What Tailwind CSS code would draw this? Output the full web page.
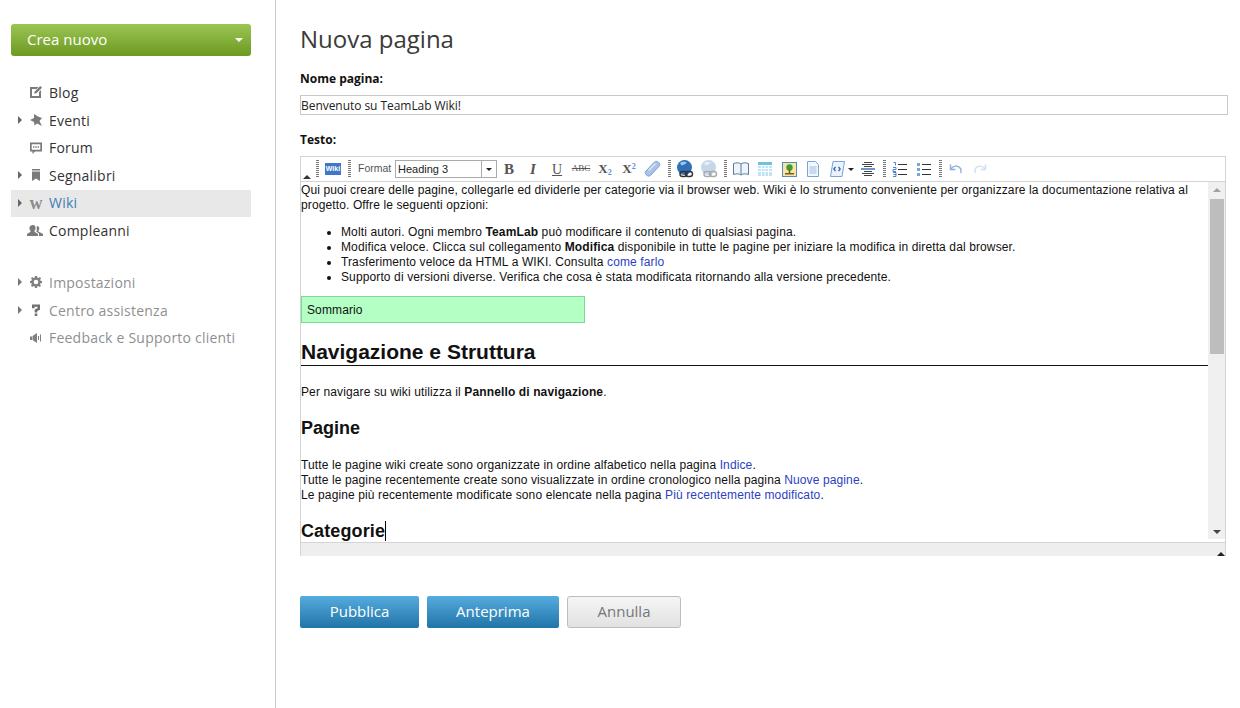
<!DOCTYPE html>
<html lang="it">
<head>
    <meta charset="UTF-8">
    <title>Nuova pagina</title>
    <script src="https://cdn.jsdelivr.net/npm/@tailwindcss/browser@4"></script>
</head>
<body class="bg-white font-['Open_Sans',sans-serif] text-[#333] overflow-hidden">
    <div class="flex h-[708px] w-[1240px]">
        <!-- sidebar -->
        <aside class="w-[276px] shrink-0 border-r border-[#c8c8c8] pt-6 pl-[11px] pr-6">
            <div class="flex h-8 items-center justify-between rounded-[3px] bg-gradient-to-b from-[#9bc552] to-[#6d9a20] pb-[2px] pl-4 pr-[8px] text-[15px] text-white">
                <span>Crea nuovo</span>
                <span class="mt-[2px] h-0 w-0 border-x-[4px] border-t-[4px] border-x-transparent border-t-white"></span>
            </div>
            <nav class="mt-[23px] text-[14px] tracking-[0.22px]">
                <div class="flex h-[28px] items-center pb-[2px] pl-[18px]">
                    <svg class="mr-[6px] size-[14px]" viewBox="0 0 14 14"><path fill="#7a7a7a" d="M1 2h8.500L7.500 4H3v7h7V7l2-2v8H1z"/><path fill="#7a7a7a" d="M11.300 1 13 2.700 7.400 8.300 5.200 8.800 5.700 6.600z"/></svg>
                    <span>Blog</span>
                </div>
                <div class="relative flex h-[28px] items-center pb-[2px] pl-[18px]">
                    <span class="absolute left-[7px] h-0 w-0 border-y-[4px] border-l-[4px] border-y-transparent border-l-[#666]"></span>
                    <svg class="mr-[6px] size-[14px]" viewBox="0 0 14 14"><path fill="#7a7a7a" d="M5 1 9 3.500 13 5 10.500 8 13 13 8 10.500 5.500 12.500 5 9 1 7 5 5z"/></svg>
                    <span>Eventi</span>
                </div>
                <div class="flex h-[27px] items-center pb-[2px] pl-[18px]">
                    <svg class="mr-[6px] size-[14px]" viewBox="0 0 14 14"><path fill="#7a7a7a" fill-rule="evenodd" d="M1 1.500h12v9H6L3.500 13v-2.500H1zM2.700 3.200v5.600h8.600V3.200zM4 5.300h1.400v1.400H4zm2.300 0h1.400v1.400H6.300zm2.300 0H10v1.400H8.600z"/></svg>
                    <span>Forum</span>
                </div>
                <div class="relative flex h-[28px] items-center pb-[2px] pl-[18px]">
                    <span class="absolute left-[7px] h-0 w-0 border-y-[4px] border-l-[4px] border-y-transparent border-l-[#666]"></span>
                    <svg class="mr-[6px] size-[14px]" viewBox="0 0 14 14"><path fill="#7a7a7a" d="M3 1h8v1.500H3zM3 3.500h8V13L7 10.500 3 13z"/></svg>
                    <span>Segnalibri</span>
                </div>
                <div class="relative flex h-[27px] items-center bg-[#e8e8e8] pb-[2px] pl-[18px] text-[#3d7fb5]">
                    <span class="absolute left-[7px] h-0 w-0 border-y-[4px] border-l-[4px] border-y-transparent border-l-[#666]"></span>
                    <span class="mr-[6px] w-[14px] text-center font-['Liberation_Serif',serif] text-[18px] leading-none font-bold tracking-normal text-[#8a8a8a]">w</span>
                    <span>Wiki</span>
                </div>
                <div class="flex h-[28px] items-center pb-[2px] pl-[16px]">
                    <svg class="mr-[6px] size-[16px]" viewBox="0 0 16 14"><path fill="#7a7a7a" d="M6 2c1.700 0 2.600 1.300 2.600 3 0 1.200-.5 2.200-1.100 2.800v1L11 11v2H0v-2l3.500-2.200v-1C2.900 7.200 2.400 6.200 2.400 5 2.400 3.300 4.300 2 6 2zM10 3c1.400 0 2.300 1 2.300 2.500 0 1-.4 1.800-.9 2.300v.8L16 11v2h-4v-2.500L9.300 8.600c.5-.9.700-2.500.4-3.600z"/></svg>
                    <span>Compleanni</span>
                </div>
                <div class="h-[24px]"></div>
                <div class="relative flex h-[28px] items-center pb-[2px] pl-[18px] text-[#8f8f8f]">
                    <span class="absolute left-[7px] h-0 w-0 border-y-[4px] border-l-[4px] border-y-transparent border-l-[#777]"></span>
                    <svg class="mr-[6px] size-[14px]" viewBox="0 0 14 14"><path fill="#808080" fill-rule="evenodd" d="M6 1h2l.3 1.600 1.100.5L10.800 2l1.300 1.300-1 1.400.4 1.100 1.500.2v2l-1.500.3-.5 1.100 1 1.300-1.400 1.400-1.300-1-1.100.5L8 13H6l-.3-1.500-1.100-.4-1.300.9L1.900 10.600l.9-1.300-.4-1.100L1 8V6l1.400-.3.500-1.100-.9-1.300L3.300 2l1.300.9 1.100-.4zM7 4.700a2.300 2.300 0 1 0 0 4.600 2.300 2.300 0 0 0 0-4.600z"/></svg>
                    <span>Impostazioni</span>
                </div>
                <div class="relative flex h-[28px] items-center pb-[2px] pl-[18px] text-[#8f8f8f]">
                    <span class="absolute left-[7px] h-0 w-0 border-y-[4px] border-l-[4px] border-y-transparent border-l-[#777]"></span>
                    <svg class="mr-[6px] size-[14px]" viewBox="0 0 14 14"><path fill="#707070" d="M3 1.500h8v5.200L8.300 8v1.500H5.700V6.500l2.800-1.200V3.800H5.500v1.400H3zM5.700 10.500h2.600V13H5.700z"/></svg>
                    <span>Centro assistenza</span>
                </div>
                <div class="flex h-[27px] items-center pb-[2px] pl-[18px] text-[#8f8f8f]">
                    <svg class="mr-[6px] size-[14px]" viewBox="0 0 14 14"><path fill="#808080" d="M1 5.500h2V9H1zM3.500 5 8 2v10L3.500 9zM9 5h1v4H9zM11 3.500h1v7h-1z"/></svg>
                    <span>Feedback e Supporto clienti</span>
                </div>
            </nav>
        </aside>

        <!-- main -->
        <main class="flex-1 pl-6 pr-3">
            <h1 class="mt-[22px] h-[34px] text-[24px] leading-[34px] font-normal text-[#3a3a3a]">Nuova pagina</h1>
            <label class="mt-[14px] block h-[17px] text-[12px] leading-[17px] font-bold text-[#111]">Nome pagina:</label>
            <input class="mt-[8px] block h-[20px] w-[928px] border border-[#c8c8c8] pr-[1px] pl-0 text-[12px] tracking-[-0.05px] text-[#222]" value="Benvenuto su TeamLab Wiki!">
            <label class="mt-[16px] block h-[17px] text-[12px] leading-[17px] font-bold text-[#111]">Testo:</label>

            <!-- editor -->
            <div class="mt-[8px] w-[926px] border-x border-t border-[#d4d4d4]">
                <div class="flex h-[25px] items-center border-b border-[#d4d4d4] pl-[2px] font-['Liberation_Sans',sans-serif]">
                    <span class="mt-auto mb-[2px] h-0 w-0 border-x-[4px] border-b-[4px] border-x-transparent border-b-[#333]"></span>
                    <span class="ml-[2px] h-[18px] w-[8px] bg-[repeating-linear-gradient(to_bottom,#777_0,#777_1px,transparent_1px,transparent_2px)] bg-[length:3px_100%] bg-center bg-no-repeat"></span>
                    <span class="flex w-6 justify-center"><span class="h-[12px] w-[16px] bg-[#3f78c8] text-center text-[7px] leading-[12px] font-bold text-white">Wiki</span></span>
                    <span class="h-[18px] w-[8px] bg-[repeating-linear-gradient(to_bottom,#777_0,#777_1px,transparent_1px,transparent_2px)] bg-[length:3px_100%] bg-center bg-no-repeat"></span>
                    <span class="ml-[5px] w-[37px] text-[10.5px] text-[#555]">Format</span>
                    <span class="flex h-[18px] w-[102px] items-center border border-[#aaa] pl-[2px] text-[11px] text-[#222]">
                        <span class="flex-1">Heading 3</span>
                        <span class="flex h-full w-[15px] items-center justify-center border-l border-[#aaa]"><span class="h-0 w-0 border-x-[3px] border-t-[3px] border-x-transparent border-t-[#222]"></span></span>
                    </span>
                    <span class="w-6 text-center font-['Liberation_Serif',serif] text-[15px] font-bold text-[#555]">B</span>
                    <span class="w-6 text-center font-['Liberation_Serif',serif] text-[15px] font-bold text-[#555] italic">I</span>
                    <span class="w-6 text-center font-['Liberation_Serif',serif] text-[14px] text-[#555] underline">U</span>
                    <span class="w-6 text-center font-['Liberation_Serif',serif] text-[9px] text-[#555] line-through">ABC</span>
                    <span class="w-6 text-center font-['Liberation_Serif',serif] text-[13px] font-bold text-[#555]">X<sub class="text-[8px] text-[#5b8fd0]">2</sub></span>
                    <span class="w-6 text-center font-['Liberation_Serif',serif] text-[13px] font-bold text-[#555]">X<sup class="text-[8px] text-[#5b8fd0]">2</sup></span>
                    <span class="flex w-6 justify-center"><svg class="size-[18px]" viewBox="0 0 18 18"><path fill="#a9c4e8" stroke="#7f9fcb" d="M1.500 11.500 10.500 2c1-1 2.700-.8 4 .2 1.400 1.200 1.800 2.800.8 3.800L6.500 15.500c-1 .9-2.300.7-3.500 0-1.200-.9-2.200-2.700-1.500-4z"/><path fill="#dbe7f6" d="M4 10 11 3l1 1-7 7z"/></svg></span>
                    <span class="h-[18px] w-[8px] bg-[repeating-linear-gradient(to_bottom,#777_0,#777_1px,transparent_1px,transparent_2px)] bg-[length:3px_100%] bg-center bg-no-repeat"></span>
                    <span class="flex w-6 justify-center"><svg class="size-[18px]" viewBox="0 0 18 18"><circle cx="8.500" cy="7.500" r="7.500" fill="#2f70b8"/><path fill="#9ec7ee" d="M4 3c2-1.500 5-1.800 7-.5L8.500 4.500 5.500 5.500z"/><rect x="4" y="11.500" width="7" height="5" rx="2.500" fill="none" stroke="#333" stroke-width="1.400"/><rect x="9.500" y="11.500" width="7" height="5" rx="2.500" fill="none" stroke="#333" stroke-width="1.400"/></svg></span>
                    <span class="flex w-6 justify-center"><svg class="size-[18px]" viewBox="0 0 18 18"><circle cx="8.500" cy="7.500" r="7.500" fill="#c4d8ea"/><path fill="#e4eff8" d="M4 3c2-1.500 5-1.800 7-.5L8.500 4.500 5.500 5.500z"/><rect x="4" y="11.500" width="7" height="5" rx="2.500" fill="none" stroke="#aaa" stroke-width="1.400"/><rect x="9.500" y="11.500" width="7" height="5" rx="2.500" fill="none" stroke="#aaa" stroke-width="1.400"/></svg></span>
                    <span class="h-[18px] w-[8px] bg-[repeating-linear-gradient(to_bottom,#777_0,#777_1px,transparent_1px,transparent_2px)] bg-[length:3px_100%] bg-center bg-no-repeat"></span>
                    <span class="flex w-6 justify-center"><svg class="size-[16px]" viewBox="0 0 16 16"><path fill="#eef4fb" stroke="#5b7a9c" d="M.5 2.500c3-1 5.500-1 7.500.5 2-1.500 4.500-1.500 7.500-.5v11c-3-1-5.500-1-7.500.5-2-1.500-4.500-1.500-7.500-.5z"/><path stroke="#5b7a9c" d="M8 3v11"/></svg></span>
                    <span class="flex w-6 justify-center"><svg class="size-[14px]" viewBox="0 0 14 14"><rect width="14" height="14" fill="#bfe3f5"/><path stroke="#fff" d="M0 3.500h14M0 6.500h14M0 9.500h14M3.500 0v14M7 0v14M10.500 0v14"/><rect width="14" height="3" fill="#6fc0e4"/></svg></span>
                    <span class="flex w-6 justify-center"><svg class="size-[15px]" viewBox="0 0 15 15"><rect x=".5" y=".5" width="14" height="14" fill="#f4e6a8" stroke="#5b87bd"/><circle cx="7.500" cy="5.500" r="3.200" fill="#3f9c2f"/><path fill="#7a5a20" d="M6.700 7.500h1.600V11H6.700z"/><path fill="#7a5a20" d="M3 11h9v1.500H3z"/></svg></span>
                    <span class="flex w-6 justify-center"><svg class="size-[16px]" viewBox="0 0 16 16"><path fill="#f2f7fd" stroke="#7ba3d6" d="M2.500.5h8l3 3v12h-11z"/><path stroke="#9bbce2" d="M4.500 6h7M4.500 8h7M4.500 10h7M4.500 12h7"/></svg></span>
                    <span class="flex w-6 justify-center"><svg class="size-[16px]" viewBox="0 0 16 16"><path fill="#eaf2fb" stroke="#7ba3d6" d="M4 .5h11.500L13 15.500H1.500z"/><path fill="none" stroke="#2a62b0" stroke-width="1.200" d="M6.500 6 4.800 8l1.700 2M9.500 6l1.700 2-1.700 2"/></svg></span>
                    <span class="mr-[2px] ml-[-1px] h-0 w-0 border-x-[3px] border-t-[3px] border-x-transparent border-t-[#222]"></span>
                    <span class="flex w-6 justify-center"><svg class="size-[16px]" viewBox="0 0 16 16"><path stroke="#444" d="M4 1.500h8M2 3.500h12M4 5.500h8M4 10.500h8M2 12.500h12M4 14.500h8"/><path stroke="#6d97cc" stroke-width="2" d="M1 8h14"/></svg></span>
                    <span class="h-[18px] w-[8px] bg-[repeating-linear-gradient(to_bottom,#777_0,#777_1px,transparent_1px,transparent_2px)] bg-[length:3px_100%] bg-center bg-no-repeat"></span>
                    <span class="flex w-6 justify-center"><svg class="size-[16px]" viewBox="0 0 16 16"><path stroke="#333" d="M6 3.500h9M6 8.500h9M6 13.500h9"/><path fill="none" stroke="#4c85c9" d="M1.500 1.500h2v3M1 6.500h3v2H1v2h3M1 11.500h3v4H1M1.500 13.500H4"/></svg></span>
                    <span class="flex w-6 justify-center"><svg class="size-[16px]" viewBox="0 0 16 16"><path stroke="#333" d="M6 3.500h9M6 8.500h9M6 13.500h9"/><path fill="#7aa5d8" d="M1 2h3v3H1zM1 7h3v3H1zM1 12h3v3H1z"/></svg></span>
                    <span class="h-[18px] w-[8px] bg-[repeating-linear-gradient(to_bottom,#777_0,#777_1px,transparent_1px,transparent_2px)] bg-[length:3px_100%] bg-center bg-no-repeat"></span>
                    <span class="flex w-6 justify-center"><svg class="size-[14px]" viewBox="0 0 14 14"><path fill="none" stroke="#8fb2dc" stroke-width="1.500" d="M1.500 2.500v5h5M2 7c2-3.500 7-4 9.500-.5.800 1.300.8 3 .2 4.500"/></svg></span>
                    <span class="flex w-6 justify-center"><svg class="size-[14px]" viewBox="0 0 14 14"><path fill="none" stroke="#cfe0f1" stroke-width="1.500" d="M12.500 2.500v5h-5M12 7C10 3.500 5 3 2.500 6.500c-.8 1.300-.8 3-.2 4.500"/></svg></span>
                </div>

                <div class="relative h-[360px] overflow-hidden font-['Liberation_Sans',sans-serif] text-[12px] leading-[15px] tracking-[0.12px] text-[#111]">
                    <div class="w-[907px] pt-[1px]">
                        <p>Qui puoi creare delle pagine, collegarle ed dividerle per categorie via il browser web. Wiki è lo strumento conveniente per organizzare la documentazione relativa al progetto. Offre le seguenti opzioni:</p>
                        <ul class="mt-[12px] list-disc pl-[40px]">
                            <li>Molti autori. Ogni membro <b>TeamLab</b> può modificare il contenuto di qualsiasi pagina.</li>
                            <li>Modifica veloce. Clicca sul collegamento <b>Modifica</b> disponibile in tutte le pagine per iniziare la modifica in diretta dal browser.</li>
                            <li>Trasferimento veloce da HTML a WIKI. Consulta <a class="text-[#2b3fbf]">come farlo</a></li>
                            <li>Supporto di versioni diverse. Verifica che cosa è stata modificata ritornando alla versione precedente.</li>
                        </ul>
                        <div class="mt-[11px] flex h-[27px] w-[284px] items-center border border-[#7fd79a] bg-[#b4ffc4] pt-[2px] pl-[5px]">Sommario</div>
                        <h2 class="mt-[17px] border-b border-[#111] pb-[2px] text-[21px] leading-[23px] font-bold tracking-normal">Navigazione e Struttura</h2>
                        <p class="mt-[19px]">Per navigare su wiki utilizza il <b>Pannello di navigazione</b>.</p>
                        <h3 class="mt-[18px] text-[18px] leading-[21px] font-bold tracking-normal">Pagine</h3>
                        <p class="mt-[19px]">Tutte le pagine wiki create sono organizzate in ordine alfabetico nella pagina <a class="text-[#2b3fbf]">Indice</a>.<br>Tutte le pagine recentemente create sono visualizzate in ordine cronologico nella pagina <a class="text-[#2b3fbf]">Nuove pagine</a>.<br>Le pagine più recentemente modificate sono elencate nella pagina <a class="text-[#2b3fbf]">Più recentemente modificato</a>.</p>
                        <h3 class="mt-[18px] text-[18px] leading-[21px] font-bold">Categorie<span class="border-r border-black"></span></h3>
                    </div>
                    <!-- scrollbar -->
                    <div class="absolute top-0 right-0 bottom-[3px] flex w-[17px] flex-col items-center bg-[#f0f0f0]">
                        <span class="mt-[6px] h-0 w-0 border-x-[4px] border-b-[4px] border-x-transparent border-b-[#a0a0a0]"></span>
                        <span class="mt-[7px] h-[155px] w-[14px] bg-[#bdbdbd]"></span>
                        <span class="mt-auto mb-[5px] h-0 w-0 border-x-[4px] border-t-[4px] border-x-transparent border-t-[#444]"></span>
                    </div>
                </div>
                <div class="relative h-[14px] border-t border-[#d4d4d4] bg-[#eeeeee]">
                    <span class="absolute right-0 bottom-0 h-0 w-0 border-x-[4px] border-b-[4px] border-x-transparent border-b-[#222]"></span>
                </div>
            </div>

            <!-- buttons -->
            <div class="mt-[40px] flex gap-2 text-[15px]">
                <button class="h-8 w-[119px] rounded-[2px] bg-gradient-to-b from-[#55acdf] to-[#1f74a8] pb-[2px] text-white">Pubblica</button>
                <button class="h-8 w-[132px] rounded-[2px] bg-gradient-to-b from-[#55acdf] to-[#1f74a8] pb-[2px] text-white">Anteprima</button>
                <button class="h-8 w-[114px] rounded-[3px] border border-[#bdbdbd] bg-gradient-to-b from-[#f5f5f5] to-[#e2e2e2] pb-[2px] text-[#777]">Annulla</button>
            </div>
        </main>
    </div>
</body>
</html>
